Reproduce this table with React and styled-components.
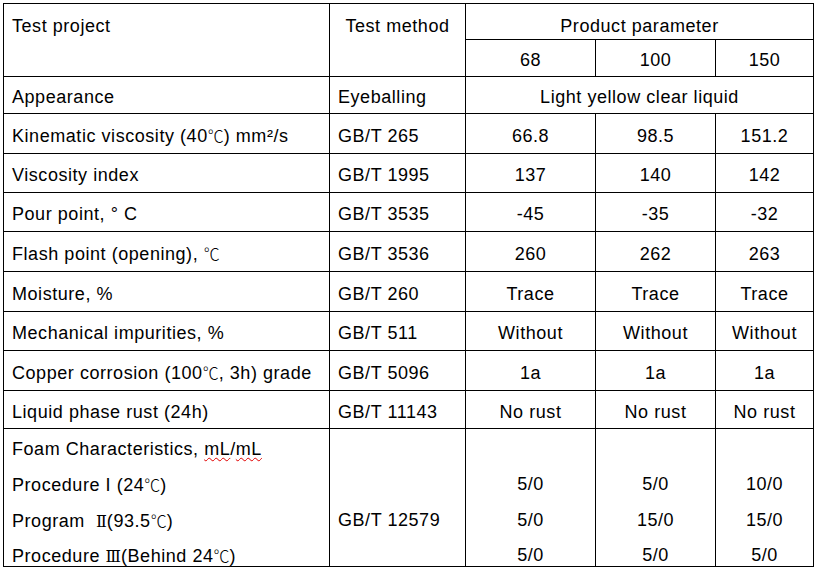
import React from 'react';
import styled, { createGlobalStyle } from 'styled-components';

const Global = createGlobalStyle`
  html, body {
    margin: 0;
    padding: 0;
    background: #fff;
  }
  body {
    padding: 3px 0 0 3px;
    font-family: "Liberation Sans", Arial, "Noto Sans CJK SC", sans-serif;
    color: #000;
  }
`;

const Sheet = styled.table`
  border-collapse: collapse;
  table-layout: fixed;
  width: 811px;
  font-size: 18px;
  line-height: 20px;
  letter-spacing: 0.55px;
`;

const Row = styled.tr`
  height: ${props => props.$h}px;
`;

const Cell = styled.td`
  border: 1px solid #000;
  padding: ${props => props.$pad || '4px 8px 0 8px'};
  text-align: ${props => props.$align || 'center'};
  vertical-align: ${props => props.$valign || 'middle'};
  white-space: nowrap;
  overflow: hidden;
`;

const Stack = styled.div`
  display: flex;
  flex-direction: column;
  gap: 15.3px;
  padding-top: 10px;
`;

const Line = styled.div`
  height: 20px;
`;

const Squiggle = styled.span`
  text-decoration: underline wavy #e00000;
  text-decoration-thickness: 1px;
  text-underline-offset: 2px;
`;

const Deg = styled.span`
  font-family: "Noto Sans CJK SC", sans-serif;
  font-weight: 300;
  font-size: 16px;
  letter-spacing: 0;
`;

const Numeral = styled.span`
  font-family: "DejaVu Serif", "Noto Sans CJK SC", serif;
  font-size: 16px;
  letter-spacing: 0;
`;

const C = <Deg>℃</Deg>;

const rows = [
  { name: 'Appearance', method: 'Eyeballing', span: 'Light yellow clear liquid', h: 37 },
  { name: <>Kinematic viscosity (40{C}) mm²/s</>, method: 'GB/T 265', vals: ['66.8', '98.5', '151.2'], h: 40 },
  { name: 'Viscosity index', method: 'GB/T 1995', vals: ['137', '140', '142'], h: 39 },
  { name: 'Pour point, ° C', method: 'GB/T 3535', vals: ['-45', '-35', '-32'], h: 39 },
  { name: <>Flash point (opening), {C}</>, method: 'GB/T 3536', vals: ['260', '262', '263'], h: 40 },
  { name: 'Moisture, %', method: 'GB/T 260', vals: ['Trace', 'Trace', 'Trace'], h: 40 },
  { name: 'Mechanical impurities, %', method: 'GB/T 511', vals: ['Without', 'Without', 'Without'], h: 39 },
  { name: <>Copper corrosion (100{C}, 3h) grade</>, method: 'GB/T 5096', vals: ['1a', '1a', '1a'], h: 40 },
  { name: 'Liquid phase rust (24h)', method: 'GB/T 11143', vals: ['No rust', 'No rust', 'No rust'], h: 38 },
];

const foamNames = [
  <>Foam Characteristics, <Squiggle>mL</Squiggle>/<Squiggle>mL</Squiggle></>,
  <>Procedure I (24{C})</>,
  <>Program&nbsp; <Numeral>Ⅱ</Numeral>(93.5{C})</>,
  <>Procedure <Numeral>Ⅲ</Numeral>(Behind 24{C})</>,
];

const foamMethod = ['', '', 'GB/T 12579', ''];
const foamVals = [
  ['', '5/0', '5/0', '5/0'],
  ['', '5/0', '15/0', '5/0'],
  ['', '10/0', '15/0', '5/0'],
];

const FoamCell = ({ lines, align }) => (
  <Cell $align={align} $valign="top" $pad="0 8px">
    <Stack>
      {lines.map((l, i) => <Line key={i}>{l || '\u00a0'}</Line>)}
    </Stack>
  </Cell>
);

export default function App() {
  return (
    <>
      <Global />
      <Sheet>
        <colgroup>
          <col style={{ width: 326 }} />
          <col style={{ width: 136 }} />
          <col style={{ width: 130 }} />
          <col style={{ width: 120 }} />
          <col style={{ width: 98 }} />
        </colgroup>
        <tbody>
          <Row $h={36}>
            <Cell rowSpan={2} $align="left" $valign="top" $pad="12px 8px 0 8px">Test project</Cell>
            <Cell rowSpan={2} $valign="top" $pad="12px 8px 0 8px">Test method</Cell>
            <Cell colSpan={3} $pad="8px 8px 0 8px">Product parameter</Cell>
          </Row>
          <Row $h={37}>
            <Cell>68</Cell>
            <Cell>100</Cell>
            <Cell>150</Cell>
          </Row>
          {rows.map((r, i) => (
            <Row key={i} $h={r.h}>
              <Cell $align="left">{r.name}</Cell>
              <Cell $align="left">{r.method}</Cell>
              {r.span
                ? <Cell colSpan={3}>{r.span}</Cell>
                : r.vals.map((v, j) => <Cell key={j}>{v}</Cell>)}
            </Row>
          ))}
          <Row $h={138}>
            <FoamCell lines={foamNames} align="left" />
            <FoamCell lines={foamMethod} align="left" />
            {foamVals.map((col, j) => <FoamCell key={j} lines={col} />)}
          </Row>
        </tbody>
      </Sheet>
    </>
  );
}
